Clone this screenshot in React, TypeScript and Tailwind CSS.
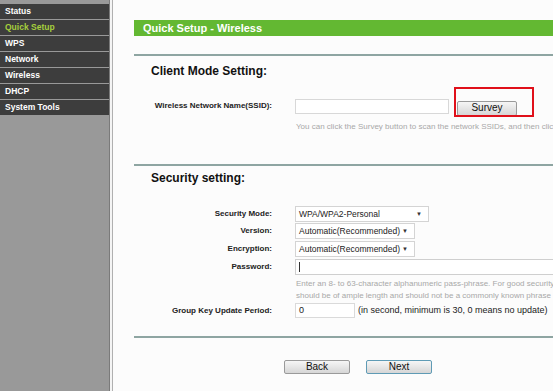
const menu = ["Status", "Quick Setup", "WPS", "Network", "Wireless", "DHCP", "System Tools"];

function Select({ value, width }: { value: string; width: string }) {
  return (
    <div className={`flex h-[16px] items-center justify-between border border-[#d4d4d4] bg-white pl-[3px] pr-[6px] text-[8.5px] text-[#222] ${width}`}>
      <span className="whitespace-nowrap">{value}</span>
      <span className="text-[6px] text-[#333]">▼</span>
    </div>
  );
}

function Row({ label, children, className = "" }: { label: string; children: React.ReactNode; className?: string }) {
  return (
    <div className={`flex items-center ${className}`}>
      <div className="w-[140px] shrink-0 pr-[2px] text-right text-[8px] font-bold text-[#222]">{label}</div>
      <div className="ml-[21px] flex items-center">{children}</div>
    </div>
  );
}

function Button({ label, focused = false, className = "" }: { label: string; focused?: boolean; className?: string }) {
  return (
    <button
      type="button"
      className={`rounded-[2px] border bg-gradient-to-b from-[#f6f6f6] to-[#d6d6d6] text-[10px] leading-none text-[#111] ${
        focused ? "border-[#5f9bb5]" : "border-[#9a9a9a]"
      } ${className}`}
    >
      {label}
    </button>
  );
}

export default function App() {
  return (
    <div className="flex h-[391px] w-[553px] overflow-hidden bg-[#fcfcfc] font-['Liberation_Sans',Arial,sans-serif]">
      <div className="w-[109px] shrink-0 bg-[#999999] pt-[4px]">
        {menu.map((item) => (
          <div
            key={item}
            className={`mb-[1px] flex h-[15px] items-center bg-[#3d3d3d] pl-[5px] text-[8.5px] font-bold ${
              item === "Quick Setup" ? "text-[#a6cf3c]" : "text-white"
            }`}
          >
            {item}
          </div>
        ))}
      </div>
      <div className="w-[1px] shrink-0 bg-[#7a7a7a]" />
      <div className="w-[2px] shrink-0 bg-[#f4f4f4]" />
      <div className="w-[1px] shrink-0 bg-[#b0b0b0]" />

      <div className="min-w-0 flex-1 overflow-hidden pl-[21px] pt-[20px]">
        <div className="flex h-[16px] w-[460px] items-center bg-[#63b832] pl-[9px] text-[11px] font-bold text-white">
          Quick Setup - Wireless
        </div>
        <div className="mt-[18px] h-[2px] w-[460px] bg-[#8ea5a2]" />

        <div className="mt-[6px] pl-[17px] text-[12px] font-bold text-[#111]">Client Mode Setting:</div>

        <Row label="Wireless Network Name(SSID):" className="mt-[14px]">
          <div className="h-[15px] w-[154px] border border-[#d8d8d8] bg-white" />
          <div className="relative ml-[8px]">
            <Button label="Survey" className="h-[15px] w-[60px]" />
            <div className="absolute left-[-3px] top-[-7px] h-[30px] w-[80px] border-2 border-[#e0101a]" />
          </div>
        </Row>
        <div className="mt-[3px] whitespace-nowrap pl-[162px] text-[8px] text-[#a8a8a8]">
          You can click the Survey button to scan the network SSIDs, and then click
        </div>

        <div className="mt-[31px] h-[2px] w-[460px] bg-[#8ea5a2]" />
        <div className="mt-[3px] pl-[17px] text-[12px] font-bold text-[#111]">Security setting:</div>

        <Row label="Security Mode:" className="mt-[19px]">
          <Select value="WPA/WPA2-Personal" width="w-[134px]" />
        </Row>
        <Row label="Version:" className="mt-[1px]">
          <Select value="Automatic(Recommended)" width="w-[120px]" />
        </Row>
        <Row label="Encryption:" className="mt-[2px]">
          <Select value="Automatic(Recommended)" width="w-[120px]" />
        </Row>
        <Row label="Password:" className="mt-[2px]">
          <div className="flex h-[16px] w-[270px] items-center border border-[#cfcfcf] bg-white pl-[3px]">
            <div className="h-[10px] w-[1px] bg-[#333]" />
          </div>
        </Row>
        <div className="mt-[3px] whitespace-nowrap pl-[162px] text-[8px] leading-[12px] text-[#a8a8a8]">
          <div>Enter an 8- to 63-character alphanumeric pass-phrase. For good security</div>
          <div>should be of ample length and should not be a commonly known phrase</div>
        </div>
        <Row label="Group Key Update Period:" className="mt-[1px]">
          <div className="flex h-[15px] w-[60px] items-center border border-[#dadada] bg-white pl-[3px] text-[9px] text-[#222]">
            0
          </div>
          <span className="ml-[3px] whitespace-nowrap text-[9px] text-[#222]">
            (in second, minimum is 30, 0 means no update)
          </span>
        </Row>

        <div className="mt-[18px] h-[2px] w-[460px] bg-[#8ea5a2]" />
        <div className="mt-[22px] flex gap-[16px] pl-[150px]">
          <Button label="Back" className="h-[14px] w-[66px]" />
          <Button label="Next" focused className="h-[14px] w-[66px]" />
        </div>
      </div>
    </div>
  );
}
